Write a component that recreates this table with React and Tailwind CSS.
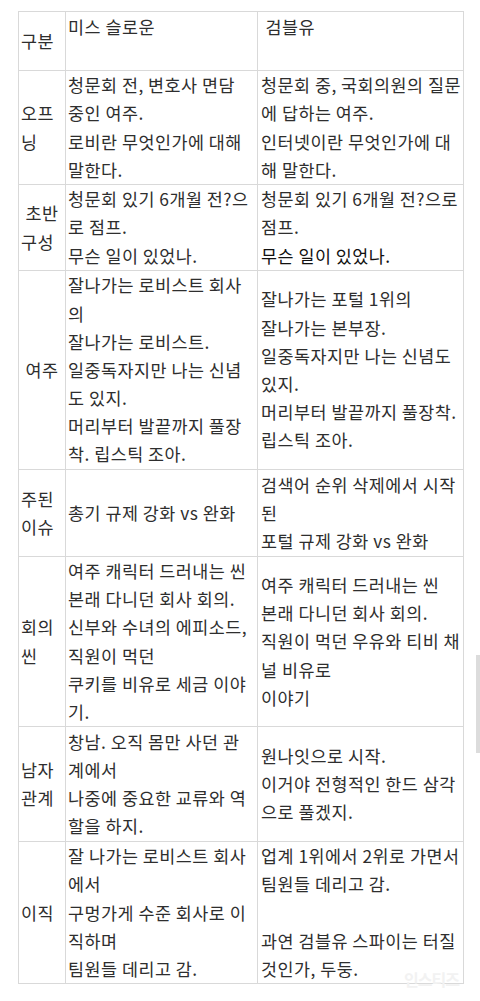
import React from 'react'

const rows = [
  {
    h: 'h-[59px]',
    label: ['구분'],
    left: ['미스 슬로운', ''],
    right: ['\u00a0검블유', ''],
  },
  {
    h: 'h-[114px]',
    label: ['오프', '닝'],
    left: ['청문회 전, 변호사 면담', '중인 여주.', '로비란 무엇인가에 대해', '말한다.'],
    right: ['청문회 중, 국회의원의 질문', '에 답하는 여주.', '인터넷이란 무엇인가에 대', '해 말한다.'],
  },
  {
    h: 'h-[86px]',
    label: ['\u00a0초반', '구성'],
    left: ['청문회 있기 6개월 전?으', '로 점프.', '무슨 일이 있었나.'],
    right: ['청문회 있기 6개월 전?으로', '점프.', { t: '무슨 일이 있었나.', dark: true }],
  },
  {
    h: 'h-[199px]',
    label: ['\u00a0여주'],
    left: [
      '잘나가는 로비스트 회사',
      '의',
      '잘나가는 로비스트.',
      '일중독자지만 나는 신념',
      '도 있지.',
      '머리부터 발끝까지 풀장',
      '착. 립스틱 조아.',
    ],
    right: [
      '잘나가는 포털 1위의',
      '잘나가는 본부장.',
      '일중독자지만 나는 신념도',
      '있지.',
      '머리부터 발끝까지 풀장착.',
      '립스틱 조아.',
    ],
  },
  {
    h: 'h-[87px]',
    label: ['주된', '이슈'],
    left: ['총기 규제 강화 vs 완화'],
    right: ['검색어 순위 삭제에서 시작', '된', '포털 규제 강화 vs 완화'],
  },
  {
    h: 'h-[170px]',
    label: ['회의', '씬'],
    left: [
      '여주 캐릭터 드러내는 씬',
      '본래 다니던 회사 회의.',
      '신부와 수녀의 에피소드,',
      '직원이 먹던',
      '쿠키를 비유로 세금 이야',
      '기.',
    ],
    right: [
      '여주 캐릭터 드러내는 씬',
      '본래 다니던 회사 회의.',
      '직원이 먹던 우유와 티비 채',
      '널 비유로',
      '이야기',
    ],
  },
  {
    h: 'h-[115px]',
    label: ['남자', '관계'],
    left: ['창남. 오직 몸만 사던 관', '계에서', '나중에 중요한 교류와 역', '할을 하지.'],
    right: ['원나잇으로 시작.', '이거야 전형적인 한드 삼각', '으로 풀겠지.'],
  },
  {
    h: 'h-[142px]',
    label: ['이직'],
    left: ['잘 나가는 로비스트 회사', '에서', '구멍가게 수준 회사로 이', '직하며', '팀원들 데리고 감.'],
    right: ['업계 1위에서 2위로 가면서', '팀원들 데리고 감.', '', '과연 검블유 스파이는 터질', '것인가, 두둥.'],
  },
]

function Lines({ items }) {
  return items.map((it, i) => {
    const line = typeof it === 'string' ? { t: it } : it
    return (
      <div
        key={i}
        className={`h-[28.2px] whitespace-nowrap ${line.dark ? 'text-[#111]' : ''}`}
      >
        {line.t || '\u00a0'}
      </div>
    )
  })
}

export default function App() {
  return (
    <div
      className="relative w-[480px] h-[1001px] bg-white overflow-hidden pt-[11px] pl-[18px] text-[#2e2e2e] text-[17.4px] tracking-[0.5px] leading-[28.2px]"
      style={{ fontFamily: '"Noto Sans CJK KR", "Noto Sans", sans-serif' }}
    >
      <table className="table-fixed border-collapse w-[445px]">
        <colgroup>
          <col className="w-[47px]" />
          <col className="w-[192px]" />
          <col className="w-[206px]" />
        </colgroup>
        <tbody>
          {rows.map((r, i) => (
            <tr key={i}>
              <td className={`${r.h} border border-[#d9d9d9] align-middle pl-[2px] pr-0 py-0`}>
                <Lines items={r.label} />
              </td>
              <td className={`${r.h} border border-[#d9d9d9] align-middle pl-[2px] pr-0 py-0`}>
                <Lines items={r.left} />
              </td>
              <td className={`${r.h} border border-[#d9d9d9] align-middle pl-[3px] pr-0 py-0`}>
                <Lines items={r.right} />
              </td>
            </tr>
          ))}
        </tbody>
      </table>

      {/* scrollbar thumb */}
      <div className="absolute right-0 top-[655px] w-[4px] h-[98px] bg-[#dcdcdc]" />

      {/* watermark */}
      <div className="absolute left-[404px] top-[965px] text-[16px] font-bold text-[#f2f2f2] tracking-[-1px]">
        인스티즈
      </div>
    </div>
  )
}
